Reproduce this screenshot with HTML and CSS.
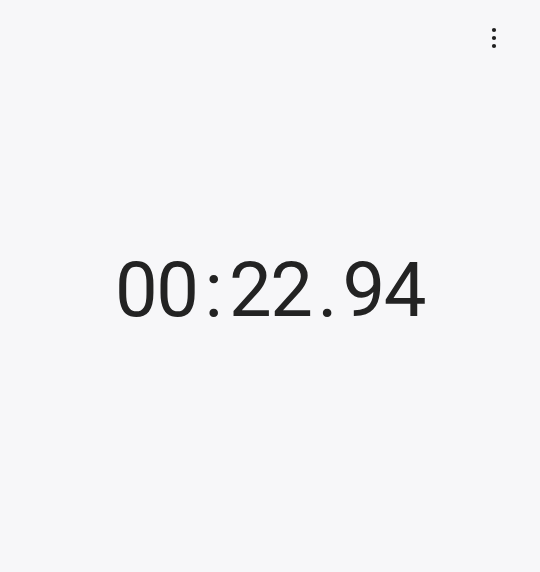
FILE: index.html
```html
<!DOCTYPE html>
<html>
<head>
<meta charset="utf-8">
<link rel="stylesheet" href="styles.css">
</head>
<body>
<div class="app">
  <header class="topbar">
    <button class="menu" aria-label="More options">
      <svg width="24" height="24" viewBox="0 0 24 24"><circle cx="12" cy="4" r="2.1" fill="#1f1f1f"/><circle cx="12" cy="12" r="2.1" fill="#1f1f1f"/><circle cx="12" cy="20" r="2.1" fill="#1f1f1f"/></svg>
    </button>
  </header>
  <main class="display">
    <div class="time"><span class="num">00</span><span class="sep colon">:</span><span class="num">22</span><span class="sep dot">.</span><span class="num">94</span></div>
  </main>
</div>
</body>
</html>
```
FILE: styles.css
```css
html, body { margin: 0; padding: 0; }
body { background: #f7f7f9; font-family: Roboto, "Noto Sans", sans-serif; color: #232323; }
.app { width: 540px; height: 572px; display: flex; flex-direction: column; }
.topbar { height: 76px; display: flex; justify-content: flex-end; align-items: flex-start; padding: 26px 34px 0 0; box-sizing: border-box; }
.menu { background: none; border: 0; padding: 0; width: 24px; height: 24px; display: block; }
.menu svg { display: block; }
.display { flex: 1; display: flex; justify-content: center; padding-top: 166px; }
.time { font-size: 76px; font-weight: 400; line-height: 96px; height: 96px; display: flex; }
.num { letter-spacing: -1.5px; }
.colon { margin: 0 6px 0 7px; }
.dot { margin: 0 5px 0 6px; }
```
